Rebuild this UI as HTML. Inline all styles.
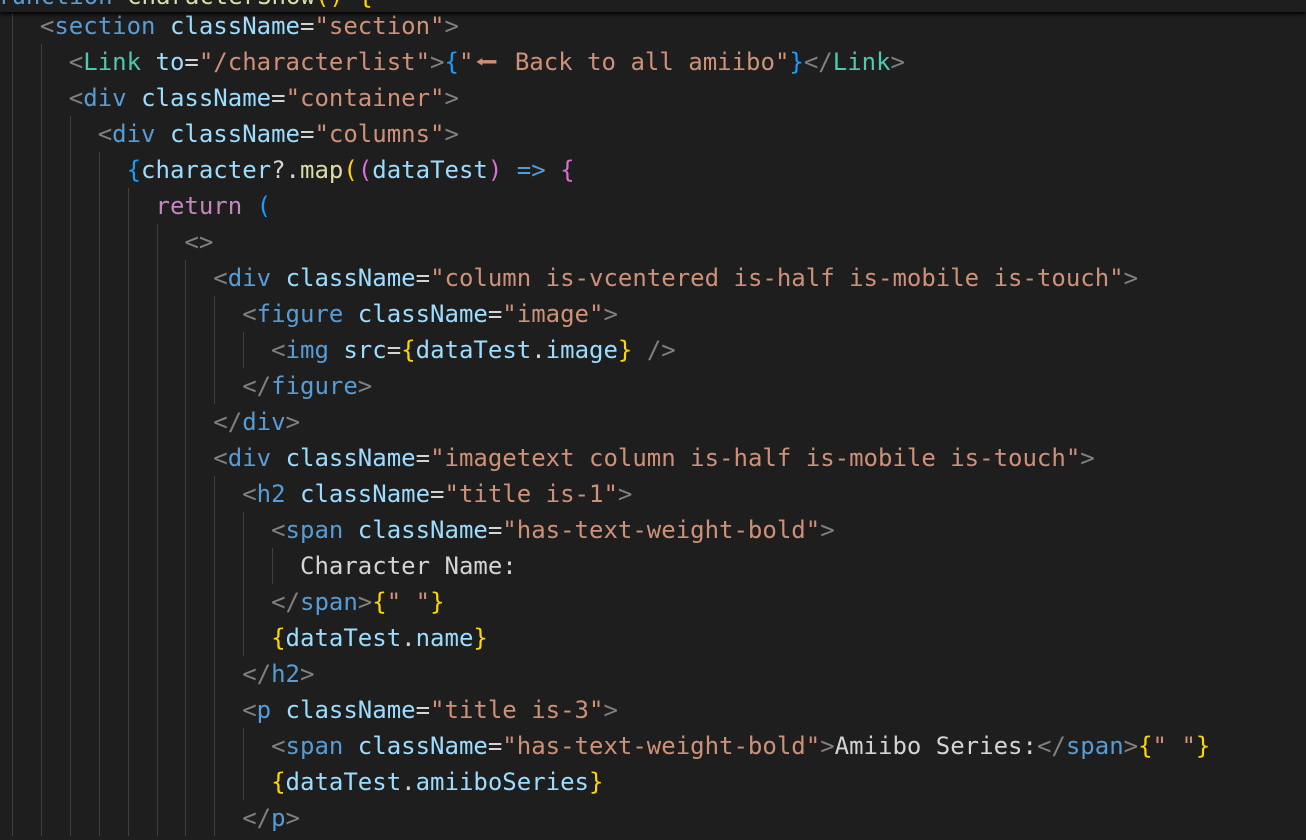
<!DOCTYPE html>
<html><head><meta charset="utf-8"><style>
html,body{margin:0;padding:0;background:#1e1e1e;width:1306px;height:840px;overflow:hidden}
.l{position:absolute;left:11px;height:36px;line-height:36px;white-space:pre;font-family:"DejaVu Sans Mono","Liberation Mono",monospace;font-size:24px;color:#d4d4d4}
.g{position:absolute;width:1px;height:36px;background:#404040}
.p{color:#808080}.t{color:#569cd6}.a{color:#9cdcfe}.s{color:#ce9178}.c{color:#4ec9b0}
.y{color:#ffd700}.k{color:#da70d6}.b{color:#179fff}.r{color:#c586c0}.f{color:#dcdcaa}.o{color:#d4d4d4}
.ar{display:inline-block;width:27px;text-align:center;transform:scaleX(1.6)}
#top{position:absolute;left:0;top:0;width:1306px;height:12px;background:#1e1e1e;box-shadow:0 2px 4px #000;overflow:hidden}
</style></head><body>
<div id="lines"></div>
<div id="top"><div class="l" style="top:-22px;left:-3px"><span class="t">function</span> <span class="f">CharacterShow</span><span class="y">()</span> <span class="y">{</span></div></div>
<script>
(function(){
var L=[
[1,'<span class="p">&lt;</span><span class="t">section</span> <span class="a">className</span>=<span class="s">"section"</span><span class="p">&gt;</span>'],
[2,'<span class="p">&lt;</span><span class="c">Link</span> <span class="a">to</span>=<span class="s">"/characterlist"</span><span class="p">&gt;</span><span class="b">{</span><span class="s">"<span class="ar">⬅</span> Back to all amiibo"</span><span class="b">}</span><span class="p">&lt;/</span><span class="c">Link</span><span class="p">&gt;</span>'],
[2,'<span class="p">&lt;</span><span class="t">div</span> <span class="a">className</span>=<span class="s">"container"</span><span class="p">&gt;</span>'],
[3,'<span class="p">&lt;</span><span class="t">div</span> <span class="a">className</span>=<span class="s">"columns"</span><span class="p">&gt;</span>'],
[4,'<span class="b">{</span><span class="a">character</span>?.<span class="f">map</span><span class="y">(</span><span class="k">(</span><span class="a">dataTest</span><span class="k">)</span> <span class="t">=&gt;</span> <span class="k">{</span>'],
[5,'<span class="r">return</span> <span class="b">(</span>'],
[6,'<span class="p">&lt;&gt;</span>'],
[7,'<span class="p">&lt;</span><span class="t">div</span> <span class="a">className</span>=<span class="s">"column is-vcentered is-half is-mobile is-touch"</span><span class="p">&gt;</span>'],
[8,'<span class="p">&lt;</span><span class="t">figure</span> <span class="a">className</span>=<span class="s">"image"</span><span class="p">&gt;</span>'],
[9,'<span class="p">&lt;</span><span class="t">img</span> <span class="a">src</span>=<span class="y">{</span><span class="a">dataTest</span>.<span class="a">image</span><span class="y">}</span> <span class="p">/&gt;</span>'],
[8,'<span class="p">&lt;/</span><span class="t">figure</span><span class="p">&gt;</span>'],
[7,'<span class="p">&lt;/</span><span class="t">div</span><span class="p">&gt;</span>'],
[7,'<span class="p">&lt;</span><span class="t">div</span> <span class="a">className</span>=<span class="s">"imagetext column is-half is-mobile is-touch"</span><span class="p">&gt;</span>'],
[8,'<span class="p">&lt;</span><span class="t">h2</span> <span class="a">className</span>=<span class="s">"title is-1"</span><span class="p">&gt;</span>'],
[9,'<span class="p">&lt;</span><span class="t">span</span> <span class="a">className</span>=<span class="s">"has-text-weight-bold"</span><span class="p">&gt;</span>'],
[10,'Character Name:'],
[9,'<span class="p">&lt;/</span><span class="t">span</span><span class="p">&gt;</span><span class="y">{</span><span class="s">" "</span><span class="y">}</span>'],
[9,'<span class="y">{</span><span class="a">dataTest</span>.<span class="a">name</span><span class="y">}</span>'],
[8,'<span class="p">&lt;/</span><span class="t">h2</span><span class="p">&gt;</span>'],
[8,'<span class="p">&lt;</span><span class="t">p</span> <span class="a">className</span>=<span class="s">"title is-3"</span><span class="p">&gt;</span>'],
[9,'<span class="p">&lt;</span><span class="t">span</span> <span class="a">className</span>=<span class="s">"has-text-weight-bold"</span><span class="p">&gt;</span>Amiibo Series:<span class="p">&lt;/</span><span class="t">span</span><span class="p">&gt;</span><span class="y">{</span><span class="s">" "</span><span class="y">}</span>'],
[9,'<span class="y">{</span><span class="a">dataTest</span>.<span class="a">amiiboSeries</span><span class="y">}</span>'],
[8,'<span class="p">&lt;/</span><span class="t">p</span><span class="p">&gt;</span>']
];
var h='',cw=14.45;
for(var i=0;i<L.length;i++){var lv=L[i][0],ty=8+36*i;
for(var k=0;k<lv;k++)h+='<div class="g" style="left:'+(12+cw*2*k).toFixed(1)+'px;top:'+ty+'px"></div>';
h+='<div class="l" style="left:'+(11+cw*2*lv).toFixed(1)+'px;top:'+ty+'px">'+L[i][1]+'</div>';}
h+='<div class="g" style="left:12px;top:-28px"></div>';
document.getElementById('lines').innerHTML=h;
})();
</script>
</body></html>
